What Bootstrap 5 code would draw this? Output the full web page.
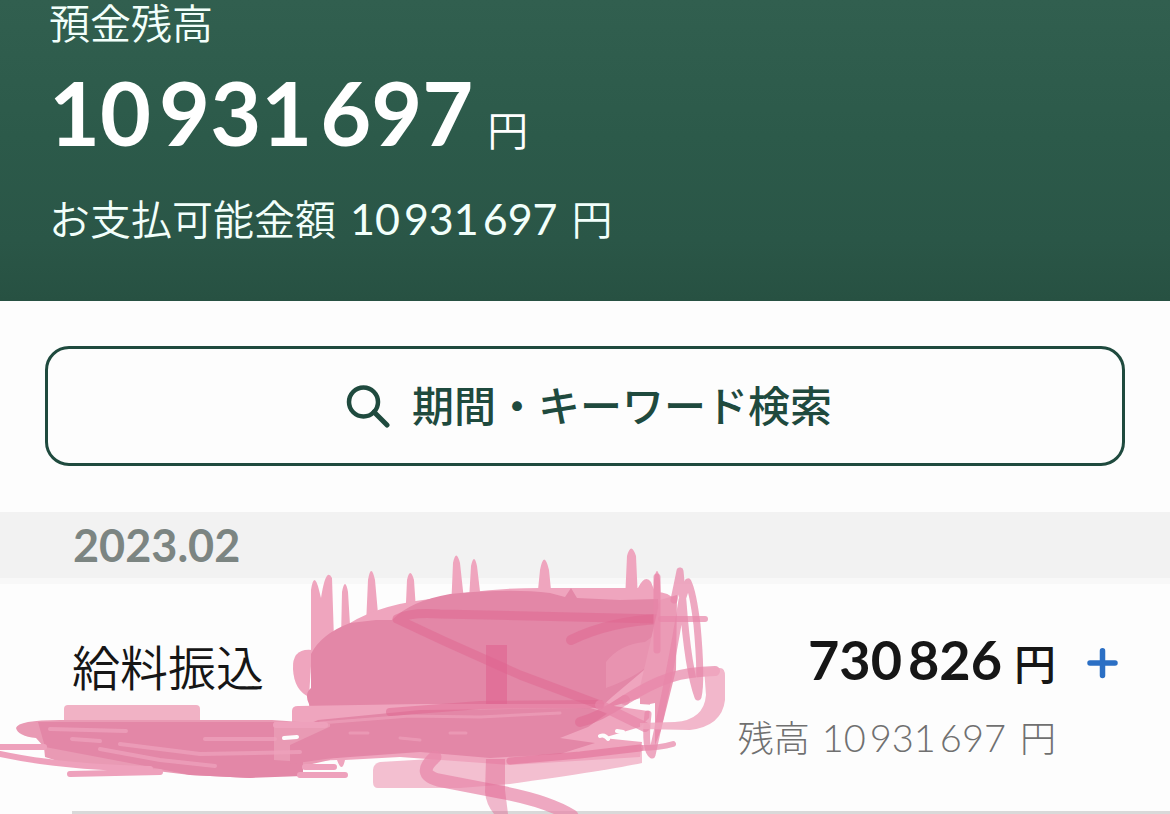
<!DOCTYPE html>
<html lang="ja">
<head>
<meta charset="utf-8">
<meta name="viewport" content="width=device-width, initial-scale=1">
<title>預金残高</title>
<link href="https://cdn.jsdelivr.net/npm/bootstrap@5.3.0/dist/css/bootstrap.min.css" rel="stylesheet">
<style>
body{font-family:Lato,"Noto Sans CJK JP",sans-serif;background:#fdfdfd;color:#161616;overflow-x:hidden}
.balance-head{background:linear-gradient(#315f4f,#2c5a4a 45%,#2a5647 80%,#275142);color:#f2fffb;padding:0 49px 53px;font-weight:350}
.label-text{font-size:41px;line-height:48px}
.total{font-size:88px;line-height:104px;font-weight:700;color:#fff;margin-top:12px}
.total .yen{font-size:41px;font-weight:350}
.total .grp{margin-left:8px}
.payable{line-height:56px;margin-top:8px}
.payable .num{font-size:43px;font-weight:400;margin-left:14px}
.grp{margin-left:4px}
.yen{margin-left:14px}
.payable .yen{font-size:41px}
.search-wrap{padding:45px 45px 46px}
.btn-search{--bs-btn-color:#1f4a3e;--bs-btn-border-color:#1f4a3e;--bs-btn-hover-color:#1f4a3e;--bs-btn-hover-border-color:#1f4a3e;border-width:3px;border-radius:24px;height:120px;font-size:42px;font-weight:500;gap:22px;background:#fdfdfd}
.month-bar{background:#f2f2f2;border-bottom:6px solid #f8f8f8;height:72px;padding:0 73px;font-size:45px;line-height:66px;font-weight:700;color:#7c8582}
.entry{margin-left:72px;padding:48px 48px 0 0;height:230px;border-bottom:3px solid #d9d9d9}
.entry-name{font-size:48px;line-height:72px;font-weight:350}
.amount{font-size:54px;line-height:56px;font-weight:700}
.amount .grp{margin-left:6px}
.amount .yen{font-size:42px;font-weight:500;margin-left:12px}
.remain{font-size:36px;line-height:48px;font-weight:300;color:#707070;margin-top:21px}
.remain .num{font-size:38px;margin-left:12px}
.scribble{position:absolute;left:0;top:0;pointer-events:none}
</style>
</head>
<body>
<header class="balance-head">
  <div class="label-text">預金残高</div>
  <div class="total"><span>10</span><span class="grp">931</span><span class="grp">697</span><span class="yen">円</span></div>
  <div class="payable label-text">お支払可能金額<span class="num">10<span class="grp">931</span><span class="grp">697</span></span><span class="yen">円</span></div>
</header>
<main>
  <div class="search-wrap">
    <button type="button" class="btn btn-search w-100 d-flex align-items-center justify-content-center">
      <svg class="ms-2" width="44" height="44" viewBox="0 0 44 44" fill="none" stroke="currentColor" stroke-width="4.5" stroke-linecap="round" aria-hidden="true"><circle cx="17.500" cy="18" r="14.500"/><path d="M28 28 41 41" stroke-width="5"/></svg>
      <span>期間・キーワード検索</span>
    </button>
  </div>
  <section class="position-relative overflow-hidden">
    <h2 class="month-bar m-0">2023.02</h2>
    <div class="entry d-flex justify-content-between">
      <div class="entry-name">給料振込</div>
      <div class="d-flex">
        <div class="text-end">
          <div class="amount">730<span class="grp">826</span><span class="yen">円</span></div>
          <div class="remain">残高<span class="num">10<span class="grp">931</span><span class="grp">697</span></span><span class="yen">円</span></div>
        </div>
        <svg class="ms-4 mt-3" width="42" height="32" viewBox="0 0 42 32" stroke="#2b6fc4" stroke-width="5.5" stroke-linecap="round" aria-hidden="true"><path d="M10 15H35M22.500 2.750V27.500"/></svg>
      </div>
    </div>
    <svg class="scribble" width="740" height="302" viewBox="0 512 740 302" fill="none" stroke-linecap="round" stroke-linejoin="round" aria-hidden="true">
      <!-- upper mass and its spikes -->
      <g fill="#efa5be">
        <path d="M311 703V590Q314 570 319 590L321 598Q326 566 332 578L334 640H341L342 592Q345 576 348 592L350 625H366L368 580Q371 562 375 580L379 625H405L407 580Q410 566 414 580L416 610H451L453 563Q456 548 460 563L464 600H469L471 566Q474 552 477 566L481 600H537L540 570Q544 549 549 570L552 600H625L627 556Q631 541 636 556L638 600H653L654 580Q657 562 660 580L662 620Z"/>
        <path d="M312 650Q292 648 293 669T309 697Z"/>
        <path d="M340 630Q370 606 430 599Q480 588 540 588H638Q645 574 651 582L655 592Q670 592 674 600L668 690 600 710 330 700Z"/>
      </g>
      <path fill="#e387a7" d="M309 704Q304 694 311 688V654Q321 634 350 623L376 620H392Q410 601 450 594Q510 588 550 593L565 597 571 588 577 598 620 600 658 599 661 640 664 652 650 665 612 697 600 708 370 714 310 712Z"/>
      <path fill="#efa5be" opacity=".4" d="M606 662Q620 644 645 642Q660 632 661 625V655Q640 676 606 688Z"/>
      <!-- lower band -->
      <path fill="#f3bfd0" d="M373 770Q373 764 380 762L500 755 642 748V763Q610 770 510 784L460 788H378Q373 788 373 782Z"/>
      <path fill="#efa5be" d="M292 711Q292 706 298 706L420 704 600 704 655 712 640 727 603 738 642 742 640 757 510 765 400 757 345 760Q342 774 337 760L280 762V730L292 730Z"/>
      <path fill="#e387a7" d="M318 720 420 710 590 708 608 713 588 727 560 738 595 743 560 754 490 758 420 752 350 757 270 763 265 728 300 728Z"/>
      <!-- left scribble -->
      <path fill="#f1b2c5" d="M64 709Q64 705 68 705H196Q200 705 200 709V740H64Z"/>
      <path fill="#e99ab4" d="M16 728Q18 720 60 720H272L330 724V760L250 778 190 775 140 769 70 765 45 757 44 747 36 738Q18 736 16 728Z"/>
      <path fill="#e387a7" d="M38 722H274V760L303 762V776L250 778 190 775 140 765 45 747Z"/>
      <path fill="#e387a7" d="M290 745 340 722V757L290 764Z"/>
      <g stroke="#eea1bc">
        <path stroke-width="6" d="M0 747H44M0 754Q60 767 150 769M305 767H334M70 774 160 772M300 775H345M276 725H325"/>
        <path stroke-width="4" opacity=".75" d="M50 729 126 731M72 739 100 741M120 744 200 754 300 752M205 739H275M100 749 160 760 215 766"/>
        <path stroke-width="3" opacity=".65" d="M350 733H368M400 738 420 740M450 733H466M320 723 410 716 480 717 560 713"/>
      </g>
      <path stroke="#fdfdfd" stroke-width="4" d="M284 738 297 737M600 736Q605 734 608 739M617 731 623 732"/>
      <!-- single strokes crossing the mass -->
      <g stroke="#df668f" stroke-opacity=".5">
        <path stroke-width="10" d="M571 640Q610 621 661 619"/>
        <path stroke-width="9" d="M661 619 440 614Q410 612 397 619L444 641 520 675 600 705"/>
        <path stroke-width="8" d="M390 712 480 705 600 704"/>
        <path stroke-width="7" d="M510 761 580 755 640 748"/>
        <path stroke-width="10" d="M580 722Q600 717 625 700"/>
      </g>
      <!-- loops and zigzags on the right -->
      <path fill="#eb9bb6" d="M660 600 677 595 676 670 661 730 655 745V705L640 704V687Z"/>
      <path fill="#fdfdfd" d="M650 704 655 703V718L649 722Z"/>
      <g stroke="#e887a9" stroke-opacity=".72">
        <path stroke-width="6" d="M661 619H705M640 748Q660 748 673 744"/>
        <path stroke-width="10" d="M600 705 645 727M625 700C660 678 680 672 715 671"/>
        <path stroke-width="7" d="M674 600 680 571 683 602Q688 670 698 697 702 680 697 625 693 592 688 582L682 600Q671 670 652 755 644 750 648 714M657 577V650"/>
        <path stroke-width="13" d="M435 757Q416 774 438 780L500 792Q548 801 572 816"/>
      </g>
      <path fill="#e06390" fill-opacity=".6" d="M486 645H507V704H486Z"/>
      <path fill="#e06390" fill-opacity=".45" d="M486 759H505V790L508 814H494Q486 804 485 792Z"/>
      <path fill="#efa5be" fill-opacity=".8" d="M704 668H720Q725 668 725 676V700Q722 726 690 730L640 729V723L675 722Q704 720 706 695Z"/>
    </svg>
  </section>
</main>
<script src="https://cdn.jsdelivr.net/npm/bootstrap@5.3.0/dist/js/bootstrap.bundle.min.js"></script>
</body>
</html>
